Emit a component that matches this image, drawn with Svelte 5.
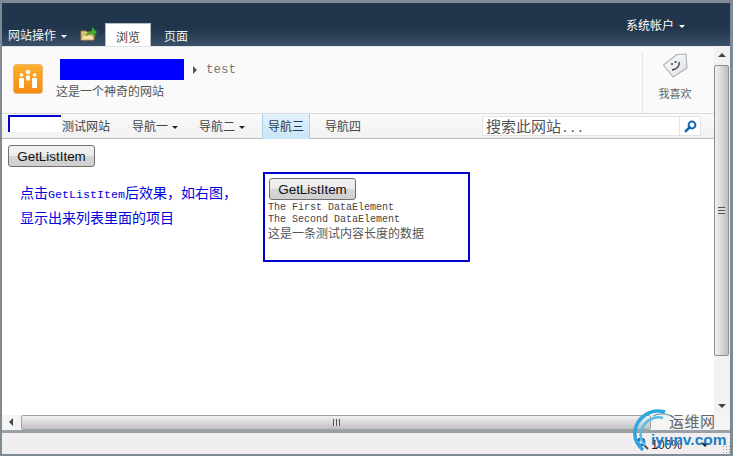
<script>
	const navItems = [
		{ label: '测试网站', arrow: false },
		{ label: '导航一', arrow: true },
		{ label: '导航二', arrow: true },
		{ label: '导航三', arrow: false, current: true },
		{ label: '导航四', arrow: false }
	];
</script>

<div class="window">
	<header class="ribbon">
		<div class="ribbon-left">
			<span class="site-actions">网站操作<i class="caret white"></i></span>
			<svg class="folder" width="18" height="16" viewBox="0 0 18 16">
				<path d="M1 5h5l1 1h7v8H1z" fill="#e4c070" stroke="#a9853a" stroke-width="0.8" />
				<path d="M1 14l2-5h12l-2 5z" fill="#f6e2a4" stroke="#b08a3c" stroke-width="0.6" />
				<path d="M6 10c1-3 3-5 6-5V1l5 5-4 5V8c-3 0-5 0-7 2z" fill="#3fae32" stroke="#2f7a1a" stroke-width="0.4" />
			</svg>
			<span class="tab active">浏览</span>
			<span class="tab">页面</span>
		</div>
		<span class="account">系统帐户<i class="caret white small"></i></span>
	</header>

	<div class="middle">
		<main class="page">
			<section class="title-row">
				<div class="logo">
					<svg width="30" height="30" viewBox="0 0 30 30">
						<defs>
							<linearGradient id="logo-bg" x1="0" y1="0" x2="0" y2="1">
								<stop offset="0" stop-color="#fdb02e" />
								<stop offset="1" stop-color="#f58a12" />
							</linearGradient>
						</defs>
						<rect x="0.5" y="0.5" width="29" height="29" rx="3" fill="url(#logo-bg)" stroke="#eeb36c" />
						<circle cx="15" cy="8" r="2.2" fill="#fff" />
						<circle cx="8.5" cy="11" r="1.8" fill="#fff" />
						<circle cx="21.5" cy="11" r="1.8" fill="#fff" />
						<rect x="6" y="14" width="5" height="10" rx="1" fill="#fff" />
						<rect x="13" y="11.5" width="4" height="5" rx="1" fill="#fff" />
						<rect x="19" y="14" width="5" height="10" rx="1" fill="#fff" />
					</svg>
				</div>
				<div class="title-text">
					<div class="crumbs">
						<span class="redacted"></span>
						<i class="crumb-arrow"></i>
						<span class="crumb">test</span>
					</div>
					<div class="subtitle">这是一个神奇的网站</div>
				</div>
				<div class="like">
					<svg width="26" height="26" viewBox="0 0 26 26">
						<defs>
							<linearGradient id="tag-bg" x1="0" y1="0" x2="1" y2="1">
								<stop offset="0" stop-color="#ffffff" />
								<stop offset="1" stop-color="#dcdfe3" />
							</linearGradient>
						</defs>
						<path d="M1.5 13L15 2.5l9-0.5 1 14L11 25z" fill="url(#tag-bg)" stroke="#aeb3b8" stroke-width="1.1" stroke-linejoin="round" />
						<circle cx="10" cy="12" r="1" fill="#333" />
						<circle cx="13.5" cy="10" r="1" fill="#333" />
						<path d="M17 10c1 4-2 7-7 8" fill="none" stroke="#333" stroke-width="1.3" />
					</svg>
					<span>我喜欢</span>
				</div>
			</section>

			<nav class="nav">
				<div class="nav-links">
					<span class="nav-mask"></span>
					{#each navItems as item}
						<span class="nav-item" class:current={item.current}>
							{item.label}{#if item.arrow}<i class="caret dark"></i>{/if}
						</span>
					{/each}
				</div>
				<div class="search">
					<span class="search-input">搜索此网站<span class="dots">...</span></span>
					<span class="search-btn">
						<svg width="13" height="13" viewBox="0 0 13 13">
							<circle cx="8" cy="5" r="3.4" fill="none" stroke="#1069b4" stroke-width="2" />
							<path d="M5.6 7.4L1.8 11.2" stroke="#1069b4" stroke-width="2.6" stroke-linecap="round" />
						</svg>
					</span>
				</div>
			</nav>

			<section class="content">
				<button type="button">GetListItem</button>
				<div class="demo">
					<p class="note">
						点击<span class="mono">GetListItem</span>后效果，如右图，<br />显示出来列表里面的项目
					</p>
					<div class="result">
						<button type="button">GetListItem</button>
						<div class="row">The First DataElement</div>
						<div class="row">The Second DataElement</div>
						<div class="row cjk">这是一条测试内容长度的数据</div>
					</div>
				</div>
			</section>
		</main>

		<aside class="vscroll">
			<i class="sb-up"></i>
			<div class="v-thumb"><span class="v-grip"></span></div>
			<i class="sb-down"></i>
		</aside>
	</div>

	<div class="hscroll">
		<i class="sb-left"></i>
		<div class="h-thumb"><span class="h-grip"></span></div>
	</div>

	<footer class="status">
		<svg class="zoom-icon" width="13" height="13" viewBox="0 0 13 13">
			<circle cx="5" cy="5" r="4" fill="#2a78c4" stroke="#1f5f9e" />
			<path d="M3 5h4M5 3v4" stroke="#fff" stroke-width="1.2" />
			<path d="M8 8l4 4" stroke="#555" stroke-width="2" />
		</svg>
		<span class="zoom">100%</span>
		<i class="zoom-caret"></i>
		<span class="resize-grip"></span>
	</footer>

	<div class="watermark">
		<svg width="70" height="46" viewBox="0 0 70 46">
			<path d="M36 3C22-1 8 8 6 22c-1 8 2 14 8 19" fill="none" stroke="#2fa6e0" stroke-width="3.5" />
			<path d="M34 9C24 6 14 13 12 23c-1 5 1 10 4 13" fill="none" stroke="#56bde8" stroke-width="2.5" />
			<path d="M24 7c10-5 24-1 29 12" fill="none" stroke="#4a7f95" stroke-width="1" />
		</svg>
		<span class="wm-cn">运维网</span>
		<span class="wm-url">iyunv.com</span>
	</div>
</div>

<style>
	:global(body) {
		margin: 0;
		overflow: hidden;
	}

	.window {
		position: relative;
		box-sizing: border-box;
		width: 733px;
		height: 456px;
		display: flex;
		flex-direction: column;
		border: 2px solid #7f8b94;
		border-top-width: 3px;
		border-right-width: 3px;
		background: #fff;
		font-family: "Noto Sans CJK SC", "Liberation Sans", sans-serif;
		font-size: 12px;
		color: #444;
		overflow: hidden;
	}

	i {
		display: inline-block;
	}

	.ribbon {
		flex: none;
		height: 43px;
		display: flex;
		justify-content: space-between;
		background: linear-gradient(#21364c 0, #21364c 60%, #3a5168 100%);
		color: #fff;
	}

	.ribbon-left {
		display: flex;
		align-items: flex-end;
		padding-left: 6px;
	}

	.site-actions {
		line-height: 17px;
		padding-bottom: 3px;
		color: #f0f3f6;
	}

	.caret {
		width: 0;
		height: 0;
		margin-left: 5px;
		border: 3px solid transparent;
		border-bottom-width: 0;
		vertical-align: 2px;
	}

	.caret.white {
		border-top-color: #fff;
	}

	.caret.dark {
		border-top-color: #222;
		margin-left: 4px;
	}

	.folder {
		margin: 0 7px 4px 13px;
	}

	.tab {
		width: 46px;
		height: 23px;
		line-height: 25px;
		text-align: center;
		color: #f0f3f6;
		margin-right: 4px;
		box-sizing: border-box;
	}

	.tab.active {
		background: #fff;
		color: #444;
		border: 1px solid #b6bcc2;
		border-bottom: 0;
		margin-right: 2px;
	}

	.account {
		margin: 13px 45px 0 0;
		line-height: 18px;
		color: #fff;
	}

	.middle {
		flex: 1;
		min-height: 0;
		display: flex;
	}

	.page {
		flex: 1;
		min-width: 0;
		display: flex;
		flex-direction: column;
	}

	.title-row {
		flex: none;
		height: 67px;
		box-sizing: border-box;
		display: flex;
		background: #fafafa;
		border-top: 1px solid #dfe4e8;
	}

	.logo {
		padding: 17px 0 0 11px;
		width: 32px;
	}

	.logo svg {
		display: block;
	}

	.title-text {
		flex: 1;
		padding: 12px 0 0 11px;
	}

	.crumbs {
		display: flex;
		align-items: center;
		padding-left: 4px;
		height: 21px;
	}

	.redacted {
		width: 124px;
		height: 21px;
		background: #0000ff;
	}

	.crumb-arrow {
		width: 0;
		height: 0;
		margin: 0 9px;
		border: 4px solid transparent;
		border-left: 4px solid #555;
		border-right-width: 0;
	}

	.crumb {
		font-family: "Liberation Mono", monospace;
		font-size: 12.5px;
		color: #777;
	}

	.subtitle {
		margin-top: 2px;
		line-height: 18px;
		color: #555;
	}

	.like {
		box-sizing: border-box;
		width: 72px;
		padding-right: 7px;
		margin-top: 5px;
		border-left: 1px solid #e4e6e8;
		display: flex;
		flex-direction: column;
		align-items: center;
		color: #666;
		font-size: 11px;
		line-height: 16px;
		gap: 7px;
	}

	.nav {
		flex: none;
		height: 26px;
		box-sizing: border-box;
		display: flex;
		justify-content: space-between;
		background: linear-gradient(#fafafa, #f1f1f1);
		border-top: 1px solid #dcdcdc;
		border-bottom: 1px solid #b9b9b9;
	}

	.nav-links {
		display: flex;
		padding-left: 6px;
	}

	.nav-mask {
		box-sizing: border-box;
		width: 53px;
		height: 17px;
		margin-top: 1px;
		background: #fff;
		border-top: 2px solid #0000c8;
		border-left: 2px solid #0000c8;
	}

	.nav-item {
		box-sizing: border-box;
		height: 25px;
		line-height: 24px;
		padding: 0 21px 0 0;
		color: #444;
		white-space: nowrap;
	}

	.nav-item:nth-child(2) {
		padding: 0 22px 0 1px;
	}

	.nav-item.current {
		padding: 0 5px;
		margin: 0 15px 0 -4px;
		background: linear-gradient(#e2f2fc, #c9e5f8);
		border: 1px solid #a9d2ea;
		border-top: 0;
		border-bottom: 0;
		color: #1c3d55;
	}

	.search {
		display: flex;
		height: 20px;
		margin: 2px 13px 0 0;
		box-sizing: border-box;
		border: 1px solid #e3e3e3;
		background: #fff;
	}

	.search-input {
		width: 197px;
		padding-left: 3px;
		box-sizing: border-box;
		font-size: 15px;
		line-height: 17px;
		color: #555;
		border-right: 1px solid #e3e3e3;
		white-space: nowrap;
	}

	.dots {
		font-family: "Liberation Mono", monospace;
		font-size: 13px;
	}

	.search-btn {
		width: 20px;
		display: flex;
		align-items: center;
		justify-content: center;
	}

	.content {
		flex: 1;
		padding: 6px 6px 0;
		background: #fff;
	}

	button {
		display: block;
		box-sizing: border-box;
		width: 87px;
		height: 22px;
		padding: 0;
		border: 1px solid #707070;
		border-radius: 3px;
		background: linear-gradient(#f2f2f2 0, #ebebeb 50%, #d6d6d6 52%, #cfcfcf 100%);
		font-family: "Liberation Sans", sans-serif;
		font-size: 13.4px;
		color: #111;
	}

	.demo {
		display: flex;
		align-items: flex-start;
		margin-top: 5px;
	}

	.note {
		width: 243px;
		flex: none;
		margin: 0;
		padding: 8px 0 0 12px;
		font-size: 14px;
		line-height: 25px;
		color: #0000e0;
	}

	.mono {
		font-family: "Liberation Mono", monospace;
		font-size: 11.67px;
		line-height: 1;
	}

	.result {
		box-sizing: border-box;
		width: 207px;
		height: 90px;
		padding: 4px 0 0 3px;
		border: 2px solid #0000d0;
	}

	.result button {
		margin: 0 0 2px 1px;
	}

	.row {
		font-family: "Liberation Mono", monospace;
		font-size: 10px;
		line-height: 12px;
		color: #444;
		white-space: nowrap;
	}

	.row.cjk {
		font-family: "Noto Sans CJK SC", sans-serif;
		font-size: 12px;
		line-height: 13px;
		color: #555;
	}

	.vscroll {
		flex: none;
		width: 16px;
		display: flex;
		flex-direction: column;
		background: #f2f2f2;
	}

	.sb-up,
	.sb-down {
		flex: none;
		width: 0;
		height: 0;
		margin: 7px auto 8px;
		border: 4px solid transparent;
	}

	.sb-up {
		border-top-width: 0;
		border-bottom-color: #444;
	}

	.sb-down {
		margin: auto auto 7px;
		border-bottom-width: 0;
		border-top-color: #444;
	}

	.v-thumb {
		flex: none;
		height: 291px;
		box-sizing: border-box;
		margin-right: 1px;
		border: 1px solid #8e8f8f;
		border-radius: 2px;
		background: linear-gradient(90deg, #f0f0f0, #dcdcdc 45%, #bdbdc2);
		display: flex;
		align-items: center;
		justify-content: center;
	}

	.v-grip {
		width: 7px;
		height: 7px;
		background: repeating-linear-gradient(#555 0 1px, #ddd 1px 3px);
	}

	.hscroll {
		flex: none;
		height: 18px;
		display: flex;
		align-items: flex-start;
		background: #f4f4f4;
		box-sizing: border-box;
		border-bottom: 3px solid #9aa1a6;
	}

	.sb-left {
		width: 0;
		height: 0;
		margin: 3px 8px 0 7px;
		border: 4px solid transparent;
		border-left-width: 0;
		border-right-color: #444;
	}

	.h-thumb {
		width: 630px;
		height: 15px;
		box-sizing: border-box;
		border: 1px solid #a3a3a3;
		border-radius: 2px;
		background: linear-gradient(#f0f0f0, #d9d9d9 50%, #bfbfc4);
		display: flex;
		align-items: center;
		justify-content: center;
	}

	.h-grip {
		width: 7px;
		height: 7px;
		background: repeating-linear-gradient(90deg, #555 0 1px, #ddd 1px 3px);
	}

	.status {
		flex: none;
		height: 21px;
		display: flex;
		align-items: center;
		justify-content: flex-end;
		background: #f0eeee;
		font-family: "Liberation Sans", sans-serif;
		font-size: 12px;
		color: #222;
	}

	.zoom-icon {
		margin-right: 2px;
	}

	.zoom {
		margin-top: 2px;
	}

	.zoom-caret {
		width: 0;
		height: 0;
		margin: 2px 13px 0 19px;
		border: 4px solid transparent;
		border-bottom-width: 0;
		border-top-color: #222;
	}

	.resize-grip {
		align-self: flex-end;
		width: 8px;
		height: 8px;
		margin-bottom: 1px;
		background: radial-gradient(circle, #9a9a9a 0 0.8px, transparent 1px) 0 0 / 3px 3px;
	}

	.watermark {
		position: absolute;
		left: 629px;
		top: 403px;
		width: 100px;
		height: 46px;
	}

	.watermark svg {
		position: absolute;
		left: -2px;
		top: 3px;
	}

	.wm-cn {
		position: absolute;
		left: 38px;
		top: 5px;
		font-size: 15px;
		line-height: 20px;
		color: #666;
		letter-spacing: 0.5px;
	}

	.wm-url {
		position: absolute;
		left: 20px;
		top: 25px;
		font-family: "Liberation Sans", sans-serif;
		font-weight: 700;
		font-size: 15.5px;
		line-height: 18px;
		color: #1f7fc4;
	}
</style>
